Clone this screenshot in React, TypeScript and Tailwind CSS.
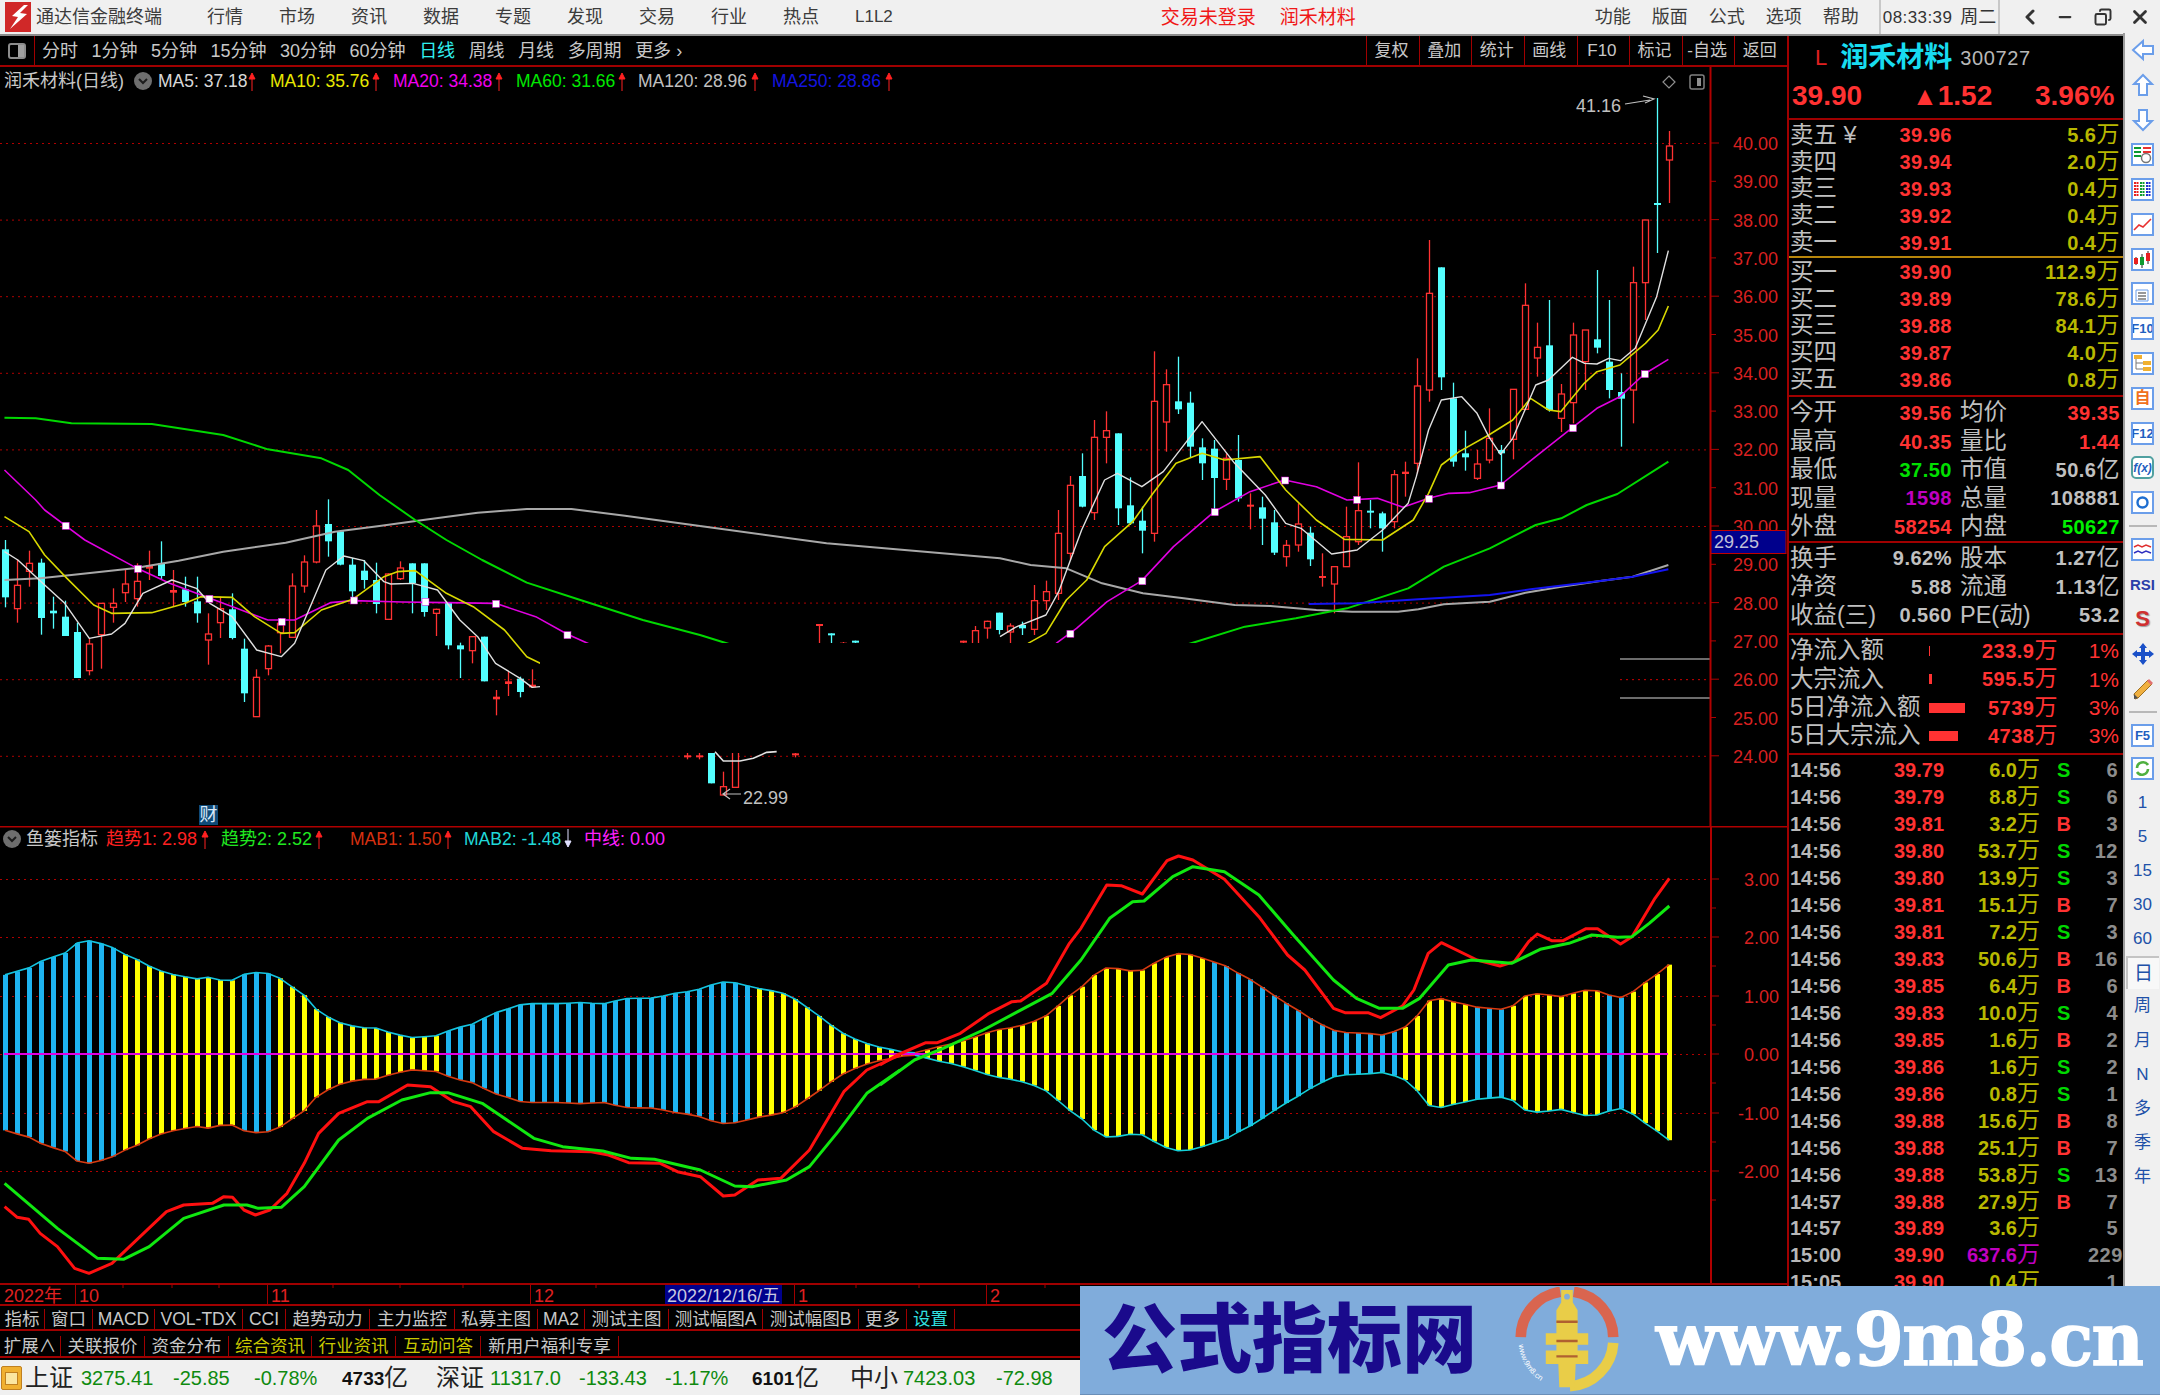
import React from 'react'
import { ChevronLeft, Minus, X, Copy } from 'lucide-react'

type Pt = [number, number]
type Candle = [number, 'r' | 'c', number, number, number, number]

const RED = '#ff3232'
const CYAN = '#54ffff'

// page coordinates from the crops of the reference
const xOf = (i: number) => 5 + 11.97 * i
const z6 = (p: Pt[]) => p.map(([x, y]) => `${x / 2.24},${400 + y / 3}`).join(' ')
const z7 = (p: Pt[]) => p.map(([x, y]) => `${1000 + x / 1.96},${220 + y / 3}`).join(' ')
const z8 = (p: Pt[]) => p.map(([x, y]) => `${x / 1.742},${820 + y / 3}`).join(' ')
const z9 = (p: Pt[]) => p.map(([x, y]) => `${880 + x / 1.742},${820 + y / 3}`).join(' ')
const z11 = (p: Pt[]) => p.map(([x, y]) => `${520 + x / 3},${600 + y / 3}`).join(' ')

const candlesLeft: Candle[] = [
  [0, 'c', 420, 448, 592, 622], [1, 'r', 478, 556, 626, 668], [2, 'r', 452, 490, 514, 560], [3, 'c', 476, 488, 654, 704],
  [4, 'c', 590, 632, 640, 686], [5, 'c', 602, 650, 708, 708], [6, 'c', 668, 696, 834, 834], [7, 'r', 716, 732, 812, 826],
  [8, 'r', 610, 610, 704, 806], [9, 'r', 565, 610, 622, 668], [10, 'r', 510, 552, 578, 606], [11, 'r', 490, 544, 596, 620],
  [12, 'r', 452, 496, 506, 540], [13, 'c', 424, 490, 528, 540], [14, 'r', 510, 570, 578, 620], [15, 'c', 530, 568, 606, 620],
  [16, 'c', 530, 604, 640, 668], [17, 'r', 640, 702, 720, 794], [18, 'r', 590, 626, 668, 714], [19, 'c', 580, 628, 714, 718],
  [20, 'c', 716, 746, 880, 906], [21, 'r', 808, 832, 950, 950], [22, 'r', 735, 738, 806, 826], [23, 'r', 654, 670, 698, 760],
  [24, 'r', 520, 558, 712, 712], [25, 'r', 466, 486, 558, 578], [26, 'r', 330, 378, 486, 490], [27, 'c', 298, 372, 424, 470],
  [28, 'c', 394, 394, 494, 496], [29, 'c', 474, 494, 574, 600], [30, 'c', 480, 512, 540, 566], [31, 'c', 488, 540, 612, 640],
  [32, 'r', 520, 522, 658, 658], [33, 'r', 484, 504, 536, 540], [34, 'c', 490, 490, 550, 640], [35, 'c', 490, 490, 636, 650],
  [36, 'r', 626, 628, 640, 708], [37, 'c', 606, 606, 736, 748], [38, 'c', 728, 736, 748, 834], [39, 'r', 710, 710, 752, 790],
  [40, 'c', 710, 710, 844, 844], [41, 'r', 870, 890, 898, 946], [42, 'r', 816, 844, 852, 888], [43, 'c', 830, 836, 876, 892],
  [44, 'r', 808, 854, 862, 862],
]

const candlesMid: Candle[] = [
  [57, 'r', 455, 466, 467, 478], [58, 'r', 455, 466, 467, 478], [59, 'c', 455, 455, 550, 550], [60, 'r', 515, 560, 585, 585],
  [61, 'r', 440, 440, 562, 562], [66, 'r', 455, 460, 461, 472], [68, 'r', 72, 72, 73, 130], [69, 'c', 100, 100, 101, 130],
  [70, 'r', 126, 128, 130, 131], [71, 'c', 122, 122, 123, 130], [80, 'r', 122, 122, 123, 130], [81, 'r', 78, 92, 140, 140],
  [82, 'r', 62, 64, 84, 116], [83, 'c', 38, 38, 90, 103],
]

const candlesRight: Candle[] = [
  [84, 'r', 1210, 1218, 1236, 1270], [85, 'c', 1205, 1215, 1225, 1245], [86, 'r', 1095, 1142, 1228, 1245], [87, 'r', 1082, 1115, 1142, 1170],
  [88, 'r', 870, 940, 1120, 1140], [89, 'r', 768, 796, 1000, 1020], [90, 'c', 700, 768, 860, 862], [91, 'r', 600, 652, 878, 900],
  [92, 'r', 574, 632, 652, 730], [93, 'c', 640, 640, 865, 915], [94, 'c', 772, 856, 910, 915], [95, 'c', 860, 902, 932, 1000],
  [96, 'r', 394, 544, 940, 965], [97, 'r', 448, 494, 606, 695], [98, 'c', 410, 544, 568, 582], [99, 'c', 515, 548, 680, 712],
  [100, 'c', 655, 682, 730, 780], [101, 'c', 660, 686, 774, 880], [102, 'r', 700, 715, 778, 810], [103, 'c', 645, 720, 835, 845],
  [104, 'r', 820, 854, 860, 928], [105, 'c', 830, 862, 896, 975], [106, 'c', 870, 907, 998, 1005], [107, 'r', 960, 976, 1010, 1040],
  [108, 'r', 850, 912, 975, 995], [109, 'c', 920, 938, 1018, 1038], [110, 'r', 1000, 1068, 1072, 1100], [111, 'r', 1040, 1040, 1092, 1180],
  [112, 'r', 860, 950, 1040, 1040], [113, 'r', 727, 872, 965, 975], [114, 'c', 840, 872, 878, 925], [115, 'c', 875, 880, 925, 995],
  [116, 'r', 750, 764, 905, 925], [117, 'r', 725, 755, 762, 830], [118, 'r', 415, 498, 730, 760], [119, 'r', 60, 220, 510, 545],
  [120, 'c', 142, 142, 472, 510], [121, 'c', 488, 535, 725, 740], [122, 'c', 632, 700, 712, 752], [123, 'r', 690, 732, 775, 780],
  [124, 'r', 565, 655, 720, 730], [125, 'c', 675, 690, 700, 790], [126, 'r', 508, 508, 658, 718], [127, 'r', 190, 256, 568, 570],
  [128, 'r', 308, 382, 414, 470], [129, 'c', 240, 376, 570, 575], [130, 'r', 492, 522, 595, 636], [131, 'r', 308, 345, 548, 610],
  [132, 'r', 330, 330, 425, 510], [133, 'c', 150, 358, 383, 400], [134, 'c', 240, 425, 510, 535], [135, 'c', 460, 516, 536, 680],
  [136, 'r', 140, 188, 510, 610], [137, 'r', 0, 0, 188, 300], [138, 'c', -366, -51, -48, 99], [139, 'r', -267, -222, -180, -51],
]

const ma120A: Pt[] = [[10, 540], [90, 535], [160, 525], [300, 505], [400, 482], [500, 455], [640, 428], [750, 395], [850, 378], [960, 358], [1070, 338], [1180, 327], [1280, 327], [1400, 347], [1568, 378]]
const ma120B: Pt[] = [[-340, 970], [0, 1015], [60, 1035], [130, 1045], [200, 1090], [280, 1120], [360, 1135], [460, 1155], [530, 1158], [620, 1170], [690, 1175], [780, 1175], [820, 1168], [870, 1153], [960, 1145], [1030, 1118], [1100, 1100], [1180, 1082], [1240, 1070], [1310, 1035]]
const ma60A: Pt[] = [[10, 53], [80, 55], [160, 70], [340, 72], [500, 105], [600, 148], [720, 175], [780, 210], [850, 285], [930, 360], [1000, 420], [1080, 480], [1180, 548], [1300, 600], [1440, 660], [1568, 705], [1640, 735]]
const ma60B: Pt[] = [[370, 1272], [480, 1220], [580, 1195], [680, 1165], [800, 1105], [870, 1040], [960, 985], [1050, 915], [1100, 895], [1150, 855], [1210, 822], [1310, 725]]
const ma20A: Pt[] = [[10, 210], [80, 300], [100, 330], [146, 376], [190, 420], [300, 500], [380, 550], [470, 595], [530, 625], [600, 660], [660, 660], [740, 608], [790, 602], [900, 606], [1000, 608], [1110, 610], [1200, 650], [1270, 702], [1320, 732]]
const ma20B: Pt[] = [[110, 1270], [150, 1225], [210, 1145], [278, 1082], [340, 980], [420, 875], [490, 815], [558, 780], [620, 800], [680, 840], [740, 835], [790, 862], [840, 835], [880, 820], [920, 818], [981, 795], [1050, 710], [1120, 625], [1170, 565], [1215, 530], [1263, 462], [1310, 418]]
const ma10A: Pt[] = [[10, 350], [65, 395], [100, 465], [150, 535], [210, 615], [250, 640], [340, 638], [410, 612], [450, 590], [520, 592], [570, 650], [630, 700], [660, 698], [720, 630], [790, 598], [860, 530], [890, 515], [930, 512], [1000, 580], [1060, 620], [1130, 690], [1180, 770], [1210, 790]]
const ma10B: Pt[] = [[55, 1270], [90, 1240], [130, 1140], [170, 1080], [205, 980], [260, 905], [300, 820], [345, 730], [396, 700], [440, 720], [510, 710], [560, 810], [620, 900], [675, 958], [750, 960], [810, 900], [840, 820], [865, 735], [900, 695], [958, 645], [1005, 600], [1040, 535], [1075, 570], [1099, 575], [1145, 490], [1170, 455], [1215, 435], [1265, 370], [1290, 330], [1310, 258]]
const ma5A: Pt[] = [[10, 455], [40, 480], [100, 555], [145, 610], [200, 715], [250, 702], [280, 670], [320, 580], [385, 540], [440, 565], [470, 610], [520, 650], [575, 750], [630, 770], [660, 730], [730, 510], [770, 468], [815, 482], [860, 545], [875, 552], [925, 550], [980, 570], [1030, 660], [1070, 710], [1110, 790], [1165, 835], [1192, 862], [1210, 860]]
const ma5B: Pt[] = [[0, 1250], [30, 1222], [90, 1185], [115, 1115], [160, 930], [205, 780], [230, 760], [278, 800], [320, 755], [396, 605], [460, 730], [520, 825], [560, 910], [590, 925], [650, 1002], [700, 990], [750, 930], [800, 850], [816, 770], [840, 630], [865, 540], [905, 530], [935, 580], [958, 650], [981, 703], [1005, 655], [1050, 495], [1075, 480], [1122, 412], [1146, 430], [1170, 432], [1193, 415], [1216, 422], [1245, 385], [1287, 230], [1310, 92]]
const ma5Low: Pt[] = [[585, 455], [610, 483], [660, 483], [700, 475], [740, 457], [770, 455]]
const ma250: Pt[] = [[605, 1152], [700, 1150], [820, 1138], [960, 1125], [1040, 1108], [1180, 1082], [1240, 1070], [1310, 1048]]
const marksA: Pt[] = [[146, 376], [308, 505], [468, 595], [630, 664], [792, 600], [952, 604], [1110, 610], [1270, 704]]
const marksB: Pt[] = [[137, 1240], [278, 1082], [420, 875], [558, 780], [699, 838], [840, 835], [981, 795], [1122, 623], [1263, 461]]

const trend1A: Pt[] = [[8, 1160], [30, 1192], [50, 1198], [70, 1240], [100, 1280], [130, 1345], [155, 1360], [195, 1330], [250, 1240], [290, 1175], [320, 1155], [370, 1150], [390, 1130], [405, 1132], [425, 1170], [445, 1185], [470, 1170], [500, 1120], [530, 1030], [555, 940], [590, 880], [640, 845], [660, 845], [710, 795], [750, 800], [790, 845], [820, 860], [860, 935], [910, 985], [960, 992], [1030, 995], [1060, 1005], [1095, 1028], [1150, 1030], [1180, 1055], [1220, 1070], [1260, 1128], [1280, 1125], [1320, 1080], [1360, 1075], [1410, 990], [1470, 815], [1510, 750], [1568, 705]]
const trend1B: Pt[] = [[0, 735], [30, 705], [80, 668], [100, 668], [140, 640], [190, 580], [230, 545], [245, 543], [290, 490], [330, 370], [350, 325], [395, 195], [420, 197], [457, 222], [500, 122], [520, 108], [545, 120], [600, 178], [660, 290], [710, 405], [740, 450], [790, 565], [810, 578], [850, 578], [872, 593], [910, 558], [930, 510], [955, 400], [978, 368], [1040, 420], [1080, 438], [1105, 425], [1130, 365], [1145, 342], [1170, 362], [1190, 362], [1230, 326], [1250, 326], [1290, 372], [1310, 350], [1350, 235], [1375, 175]]
const trend2A: Pt[] = [[8, 1090], [100, 1225], [170, 1315], [215, 1318], [260, 1280], [320, 1195], [390, 1155], [430, 1155], [450, 1165], [490, 1162], [530, 1100], [590, 960], [640, 895], [700, 840], [750, 818], [780, 818], [840, 850], [930, 955], [980, 980], [1050, 993], [1100, 1015], [1140, 1018], [1220, 1050], [1280, 1098], [1310, 1100], [1370, 1080], [1410, 1040], [1460, 935], [1510, 820], [1568, 750]]
const trend2B: Pt[] = [[0, 795], [60, 720], [110, 685], [180, 630], [240, 575], [300, 520], [350, 420], [400, 295], [440, 245], [460, 243], [510, 170], [545, 140], [600, 155], [660, 225], [720, 345], [790, 480], [830, 535], [870, 565], [910, 565], [940, 535], [990, 435], [1030, 420], [1100, 430], [1150, 388], [1200, 370], [1240, 345], [1285, 352], [1310, 350], [1340, 310], [1375, 258]]

// histogram envelope, read every 21px of the crops
const histA = [466, 455, 445, 425, 412, 400, 370, 363, 372, 385, 405, 420, 440, 455, 465, 472, 478, 472, 482, 482, 462, 458, 462, 478, 505, 530, 575, 595, 612, 620, 625, 625, 640, 648, 655, 650, 648, 630, 620, 612, 590, 575, 565, 552, 552, 552, 552, 550, 548, 552, 552, 540, 535, 536, 535, 526, 518, 515, 505, 490, 485, 492, 502, 510, 515, 525, 548, 575, 600, 630, 650, 665, 678, 686, 692]
const histB = [702, 697, 683, 678, 668, 658, 645, 632, 627, 622, 610, 598, 575, 535, 515, 480, 445, 445, 450, 460, 438, 418, 402, 402, 410, 425, 432, 455, 472, 495, 520, 545, 565, 590, 610, 630, 638, 640, 640, 648, 638, 628, 600, 545, 535, 545, 552, 562, 565, 570, 563, 530, 522, 525, 532, 522, 512, 512, 525, 535, 518, 490, 465, 435]
const envelope: Pt[] = [
  ...histA.map((v, k): Pt => [(8 + 21 * k) / 1.742, (703 - v) / 3]),
  ...histB.map((v, k): Pt => [880 + (50 + 21 * k) / 1.742, (703 - v) / 3]),
]
const ampAt = (x: number) => {
  for (let k = 1; k < envelope.length; k++) {
    if (x <= envelope[k][0]) {
      const [x0, a0] = envelope[k - 1]
      const [x1, a1] = envelope[k]
      return a0 + ((a1 - a0) * (x - x0)) / (x1 - x0)
    }
  }
  return envelope[envelope.length - 1][1]
}
const yellowRanges: Pt[] = [[118, 238], [276, 445], [755, 1213], [1397, 1470], [1506, 1602], [1626, 1700]]
const bars = Array.from({ length: 140 }, (_, i) => {
  const x = xOf(i)
  return { x: Math.round(x), a: Math.max(ampAt(x), 0.5), yellow: yellowRanges.some(([a, b]) => x >= a && x < b) }
})
const envLine = (from: number, to: number, side: number) =>
  bars.filter((b) => b.x >= from && b.x <= to).map((b) => `${b.x},${1054 + (side > 0 ? 0.965 : -1) * b.a}`).join(' ')

function Candles({ data, base }: { data: Candle[]; base: number }) {
  const y = (v: number) => base + v / 3
  return (
    <>
      {data.map(([i, c, hi, top, bot, lo]) => {
        const x = Math.round(xOf(i))
        const color = c === 'r' ? RED : CYAN
        const h = y(bot) - y(top)
        return (
          <g key={i}>
            <line x1={x + 0.5} x2={x + 0.5} y1={y(hi)} y2={y(lo)} stroke={color} strokeWidth="1.3" />
            {c === 'c' || h < 4 ? (
              <rect x={x - 3} y={y(top)} width="7" height={Math.max(h, 2)} fill={color} />
            ) : (
              <rect x={x - 2.5} y={y(top)} width="6" height={h} fill="#000" stroke={color} strokeWidth="1.3" />
            )}
          </g>
        )
      })}
    </>
  )
}

function Grid({ ys }: { ys: number[] }) {
  return (
    <>
      {ys.map((y) => (
        <line key={y} x1="0" x2="1710" y1={y + 0.5} y2={y + 0.5} stroke="#b00000" strokeDasharray="2 4" />
      ))}
    </>
  )
}

function MainChart() {
  const labels = Array.from({ length: 17 }, (_, k) => 40 - k)
  const py = (p: number) => 143 + (40 - p) * 38.3
  return (
    <svg viewBox="0 67 1787 759" className="block w-[1787px] h-[759px]">
      <Grid ys={[40, 38, 36, 34, 32, 30, 28, 26, 24].map(py)} />
      <Candles data={candlesLeft} base={400} />
      <Candles data={candlesMid} base={600} />
      <Candles data={candlesRight} base={220} />
      <g fill="none" strokeLinejoin="round">
        <polyline points={z6(ma120A)} stroke="#a8a8a8" strokeWidth="2" />
        <polyline points={`${1568 / 2.24},${400 + 378 / 3} ${z7(ma120B)}`} stroke="#a8a8a8" strokeWidth="2" />
        <polyline points={z6(ma60A)} stroke="#00d800" strokeWidth="2" />
        <polyline points={z7(ma60B)} stroke="#00d800" strokeWidth="2" />
        <polyline points={z7(ma250)} stroke="#1414f0" strokeWidth="2" />
        <polyline points={z6(ma20A)} stroke="#e000e0" strokeWidth="1.6" />
        <polyline points={z7(ma20B)} stroke="#e000e0" strokeWidth="1.6" />
        <polyline points={z6(ma10A)} stroke="#d8d800" strokeWidth="1.6" />
        <polyline points={z7(ma10B)} stroke="#d8d800" strokeWidth="1.6" />
        <polyline points={z6(ma5A)} stroke="#e0e0e0" strokeWidth="1.4" />
        <polyline points={z7(ma5B)} stroke="#e0e0e0" strokeWidth="1.4" />
      </g>
      {marksA.map(([x, y]) => (
        <rect key={x} x={x / 2.24 - 3} y={400 + y / 3 - 3} width="7" height="7" fill="#fff" stroke="#e000e0" strokeWidth="0.5" />
      ))}
      {marksB.map(([x, y]) => (
        <rect key={x} x={1000 + x / 1.96 - 3} y={220 + y / 3 - 3} width="7" height="7" fill="#fff" stroke="#e000e0" strokeWidth="0.5" />
      ))}
      {/* the part of the chart that is blanked out in the picture */}
      <rect x="540" y="643" width="1080" height="110" fill="#000" />
      <polyline points={z11(ma5Low)} fill="none" stroke="#e0e0e0" strokeWidth="1.6" />
      <line x1="1620" x2="1710" y1="659" y2="659" stroke="#909090" strokeWidth="1.5" />
      <line x1="1620" x2="1710" y1="698" y2="698" stroke="#909090" strokeWidth="1.5" />
      <line x1="1620" x2="1710" y1="679.5" y2="679.5" stroke="#b00000" strokeDasharray="2 4" />

      {/* high and low marks */}
      <text x="1576" y="112" fontSize="18" fill="#c0c0c0">41.16</text>
      <path d="M1625 104 L1650 100 M1643 96 L1654 99 L1645 103" fill="none" stroke="#c0c0c0" strokeWidth="1.2" />
      <text x="743" y="804" fontSize="18" fill="#c0c0c0">22.99</text>
      <path d="M741 794 L724 794 M730 789 L723 794 L730 799" fill="none" stroke="#c0c0c0" strokeWidth="1.2" />
      <path d="M1669 76 L1675 82 L1669 88 L1663 82 Z" fill="none" stroke="#909090" strokeWidth="1.2" />
      <rect x="1690" y="75" width="14" height="14" rx="2" fill="none" stroke="#808080" strokeWidth="1.5" />
      <rect x="1697" y="78" width="4" height="8" fill="#909090" />

      <rect x="199" y="805" width="19" height="20" fill="#0f4a78" />
      <text x="199.5" y="821" fontSize="18" fill="#d8e8f8">财</text>

      {/* price axis */}
      <line x1="1710.5" x2="1710.5" y1="67" y2="826" stroke="#b00000" strokeWidth="2" />
      {labels.map((p) => (
        <g key={p}>
          <line x1="1711" x2={p % 2 === 0 ? 1719 : 1716} y1={py(p)} y2={py(p)} stroke="#b00000" />
          <text x="1733" y={py(p) + 7} fontSize="18" fill="#d82020">{p}.00</text>
        </g>
      ))}
      <rect x="1711" y="530.5" width="75" height="23" fill="#00008c" stroke="#c00000" />
      <text x="1714" y="548" fontSize="18" fill="#c0c0d8">29.25</text>
    </svg>
  )
}

function IndicatorChart() {
  const ticks = [
    ['3.00', 879], ['2.00', 937], ['1.00', 996], ['0.00', 1054], ['-1.00', 1113], ['-2.00', 1171],
  ] as const
  return (
    <svg viewBox="0 826 1787 457" className="block w-[1787px] h-[457px]">
      <Grid ys={ticks.map((t) => t[1])} />
      {bars.map((b) => (
        <rect key={b.x} x={b.x - 2} y={1054 - b.a} width="5" height={b.a * 1.965} fill={b.yellow ? '#ffff00' : '#1eb4f0'} />
      ))}
      <g fill="none" strokeLinejoin="round">
        <polyline points={envLine(0, 915, -1)} stroke="#14c4e0" strokeWidth="1.6" />
        <polyline points={envLine(0, 915, 1)} stroke="#d83a10" strokeWidth="1.6" />
        <polyline points={envLine(905, 1700, -1)} stroke="#d83a10" strokeWidth="1.6" />
        <polyline points={envLine(905, 1700, 1)} stroke="#14d0d8" strokeWidth="1.6" />
      </g>
      <line x1="4" x2="1668" y1="1054" y2="1054" stroke="#e000e0" strokeWidth="2" />
      <g fill="none" strokeLinejoin="round" strokeWidth="3">
        <polyline points={z8(trend1A)} stroke="#ff1010" />
        <polyline points={z9(trend1B)} stroke="#ff1010" />
        <polyline points={z8(trend2A)} stroke="#10e810" />
        <polyline points={z9(trend2B)} stroke="#10e810" />
      </g>
      <line x1="0" x2="1787" y1="826.5" y2="826.5" stroke="#b00000" strokeWidth="2" />
      <line x1="1711" x2="1711" y1="826" y2="1283" stroke="#b00000" strokeWidth="2" />
      {ticks.map(([t, y]) => (
        <g key={t}>
          <line x1="1711" x2="1719" y1={y} y2={y} stroke="#b00000" />
          <line x1="1711" x2="1716" y1={y + 29} y2={y + 29} stroke="#b00000" />
          <text x="1779" y={y + 7} fontSize="18" fill="#d82020" textAnchor="end">{t}</text>
        </g>
      ))}
    </svg>
  )
}

function UpArrow({ down, className }: { down?: boolean; className: string }) {
  return (
    <svg viewBox="0 0 8 20" className={`w-[8px] h-[20px] shrink-0 ${className}`}>
      {down ? <path d="M4 0V13 M1 12L4 18L7 12Z" stroke="currentColor" fill="currentColor" /> : <path d="M4 20V7 M1 8L4 2L7 8Z" stroke="currentColor" fill="currentColor" />}
    </svg>
  )
}

function CircleBtn() {
  return (
    <span className="flex items-center justify-center w-[18px] h-[18px] rounded-full bg-[#6e6e6e] shrink-0">
      <svg viewBox="0 0 12 12" className="w-[12px] h-[12px]">
        <path d="M2 4L6 8L10 4" fill="none" stroke="#1c1c1c" strokeWidth="2" />
      </svg>
    </span>
  )
}

const maLegend = [
  { text: 'MA5: 37.18', cls: 'text-[#d8d8d8] w-[88px] ml-[6px]' },
  { text: 'MA10: 35.76', cls: 'text-[#e8e800] w-[100px] ml-[14px]' },
  { text: 'MA20: 34.38', cls: 'text-[#f000f0] w-[100px] ml-[13px]' },
  { text: 'MA60: 31.66', cls: 'text-[#00e800] w-[100px] ml-[13px]' },
  { text: 'MA120: 28.96', cls: 'text-[#c0c0c0] w-[111px] ml-[12px]' },
  { text: 'MA250: 28.86', cls: 'text-[#1414e0] w-[111px] ml-[13px]' },
]

const fullTabs = [
  { t: '指标', w: 'w-[45px]' }, { t: '窗口', w: 'w-[48px]' }, { t: 'MACD', w: 'w-[62px]' }, { t: 'VOL-TDX', w: 'w-[88px]' },
  { t: 'CCI', w: 'w-[43px]' }, { t: '趋势动力', w: 'w-[84px]' }, { t: '主力监控', w: 'w-[85px]' }, { t: '私募主图', w: 'w-[83px]' },
  { t: 'MA2', w: 'w-[47px]' }, { t: '测试主图', w: 'w-[84px]' }, { t: '测试幅图A', w: 'w-[94px]' }, { t: '测试幅图B', w: 'w-[96px]' },
  { t: '更多', w: 'w-[48px]' }, { t: '设置', w: 'w-[48px] text-[#30e0e0]' },
]
const extTabs = [
  { t: '扩展∧', w: 'w-[61px]' }, { t: '关联报价', w: 'w-[84px]' }, { t: '资金分布', w: 'w-[84px]' },
  { t: '综合资讯', w: 'w-[83px] text-[#c8c800]' }, { t: '行业资讯', w: 'w-[84px] text-[#c8c800]' }, { t: '互动问答', w: 'w-[85px] text-[#c8c800]' },
  { t: '新用户福利专享', w: 'w-[138px]' },
]

function TabRow({ tabs, className }: { tabs: { t: string; w: string }[]; className: string }) {
  return (
    <div className={`flex border-b-2 border-[#a00000] ${className}`}>
      {tabs.map((tab) => (
        <div key={tab.t} className={`flex items-center justify-center border-r border-[#a00000] text-[17.5px] whitespace-nowrap ${tab.w}`}>
          {tab.t}
        </div>
      ))}
    </div>
  )
}

function LeftColumn() {
  const ticks = [123, 172, 219, 333, 400, 463, 596, 856, 919, 1045]
  return (
    <div className="w-[1787px] shrink-0 flex flex-col">
      <div className="h-[31px] flex items-center border-b-2 border-[#a00000] text-[#c8c8c8] text-[18px] leading-none">
        <div className="w-[35px] h-full flex items-center justify-center border-r border-[#a00000]">
          <span className="w-[18px] h-[16px] rounded-[3px] border-2 border-[#8c8c8c] flex justify-end">
            <span className="w-[6px] bg-[#a0a0a0]" />
          </span>
        </div>
        <div className="flex gap-[13.5px] ml-[7px]">
          {['分时', '1分钟', '5分钟', '15分钟', '30分钟', '60分钟'].map((t) => <span key={t}>{t}</span>)}
          <span className="text-[#30f0f0]">日线</span>
          <span>周线</span>
          <span>月线</span>
          <span>多周期</span>
          <span>更多 ›</span>
        </div>
        <div className="ml-auto flex h-full">
          {['复权', '叠加', '统计', '画线', 'F10', '标记', '-自选', '返回'].map((t) => (
            <div key={t} className="w-[52.6px] h-full flex items-center justify-center border-l border-[#a00000] text-[17px] whitespace-nowrap pr-[3px]">{t}</div>
          ))}
        </div>
      </div>

      <div className="relative h-[759px]">
        <MainChart />
        <div className="absolute left-[4px] top-[3px] flex items-center h-[22px] text-[17.5px] whitespace-nowrap">
          <span className="text-[#c8c8c8] text-[18px] w-[130px]">润禾材料(日线)</span>
          <CircleBtn />
          {maLegend.map((m) => (
            <React.Fragment key={m.text}>
              <span className={m.cls}>{m.text}</span>
              <UpArrow className="text-[#ff2020] ml-[2px]" />
            </React.Fragment>
          ))}
        </div>
      </div>

      <div className="relative h-[457px]">
        <IndicatorChart />
        <div className="absolute left-[3px] top-[2px] flex items-center h-[22px] text-[17.5px] whitespace-nowrap">
          <CircleBtn />
          <span className="text-[#c8c8c8] w-[80px] ml-[5px] text-[18px]">鱼篓指标</span>
          <span className="text-[#ff2020] w-[92px] text-[18px]">趋势1: 2.98</span>
          <UpArrow className="text-[#ff2020] ml-[3px]" />
          <span className="text-[#20e820] w-[92px] ml-[12px] text-[18px]">趋势2: 2.52</span>
          <UpArrow className="text-[#ff2020] ml-[2px]" />
          <span className="text-[#d83010] w-[92px] ml-[27px]">MAB1: 1.50</span>
          <UpArrow className="text-[#ff2020] ml-[2px]" />
          <span className="text-[#20d8d8] w-[98px] ml-[12px]">MAB2: -1.48</span>
          <UpArrow down className="text-[#e0e0ff] ml-[2px]" />
          <span className="text-[#ff20ff] ml-[12px] text-[18px]">中线: 0.00</span>
        </div>
      </div>

      <div className="relative h-[23px] flex border-y-2 border-[#a00000] text-[#e02020] text-[18px] leading-none">
        <div className="w-[76px] flex items-center pl-[4px] pt-[2px] border-r border-[#a00000] whitespace-nowrap">2022年</div>
        <div className="w-[192px] flex items-center pl-[3px] pt-[2px] border-r border-[#a00000]">10</div>
        <div className="w-[263px] flex items-center pl-[3px] pt-[2px] border-r border-[#a00000]">11</div>
        <div className="w-[134px] flex items-center pl-[3px] pt-[2px]">12</div>
        <div className="w-[117px] flex items-center justify-center pt-[2px] bg-[#00008c] text-[#c8c8e0] text-[18px] whitespace-nowrap">2022/12/16/五</div>
        <div className="w-[12px]" />
        <div className="w-[192px] flex items-center pl-[3px] pt-[2px] border-l border-[#a00000]">1</div>
        <div className="flex items-center pl-[3px] pt-[2px] border-l border-[#a00000]">2</div>
        <svg viewBox="0 0 1787 4" className="absolute left-0 top-0 w-[1787px] h-[4px]">
          {ticks.map((x) => <line key={x} x1={x} x2={x} y1="0" y2="3" stroke="#a00000" />)}
        </svg>
      </div>
      <TabRow tabs={fullTabs} className="h-[25px] pt-[3px] text-[#c8c8c8]" />
      <TabRow tabs={extTabs} className="h-[27px] pt-[5px] text-[#c8c8c8]" />
    </div>
  )
}

function Wan({ cls }: { cls?: string }) {
  return <span className={`font-normal text-[23px] leading-none ${cls ?? ''}`}>万</span>
}

const num = 'font-bold text-[20px] tracking-[0.5px]'
const label = 'text-[23.5px] text-[#c0c0c0] leading-none whitespace-nowrap'

function QuoteRow({ name, price, vol }: { name: string; price: string; vol: string }) {
  return (
    <div className="h-[26.9px] flex items-center">
      <span className={`${label} w-[108px] pl-[1px]`}>{name}</span>
      <span className={`${num} text-[#ff3232] w-[55px] text-right`}>{price}</span>
      <span className={`${num} text-[#b8b800] flex-1 text-right pr-[3px]`}>{vol}<Wan /></span>
    </div>
  )
}

function StatRow({ a, b, c, d, cls1, cls2, rowCls }: { a: string; b: React.ReactNode; c: string; d: React.ReactNode; cls1: string; cls2: string; rowCls: string }) {
  return (
    <div className={`${rowCls} flex items-center`}>
      <span className={`${label} pl-[1px] w-[82px]`}>{a}</span>
      <span className={`${num} ${cls1} w-[81px] text-right`}>{b}</span>
      <span className={`${label} ml-[8px] w-[66px]`}>{c}</span>
      <span className={`${num} ${cls2} flex-1 text-right pr-[3px]`}>{d}</span>
    </div>
  )
}

const yi = <span className="font-normal text-[23px] leading-none">亿</span>

const flows = [
  { n: '净流入额', w: 1, v: '233.9', p: '1%' },
  { n: '大宗流入', w: 3, v: '595.5', p: '1%' },
  { n: '5日净流入额', w: 36, v: '5739', p: '3%' },
  { n: '5日大宗流入', w: 29, v: '4738', p: '3%' },
]

const trades = [
  ['14:56', '39.79', '6.0', 'S', '6'], ['14:56', '39.79', '8.8', 'S', '6'], ['14:56', '39.81', '3.2', 'B', '3'],
  ['14:56', '39.80', '53.7', 'S', '12'], ['14:56', '39.80', '13.9', 'S', '3'], ['14:56', '39.81', '15.1', 'B', '7'],
  ['14:56', '39.81', '7.2', 'S', '3'], ['14:56', '39.83', '50.6', 'B', '16'], ['14:56', '39.85', '6.4', 'B', '6'],
  ['14:56', '39.83', '10.0', 'S', '4'], ['14:56', '39.85', '1.6', 'B', '2'], ['14:56', '39.86', '1.6', 'S', '2'],
  ['14:56', '39.86', '0.8', 'S', '1'], ['14:56', '39.88', '15.6', 'B', '8'], ['14:56', '39.88', '25.1', 'B', '7'],
  ['14:56', '39.88', '53.8', 'S', '13'], ['14:57', '39.88', '27.9', 'B', '7'], ['14:57', '39.89', '3.6', '', '5'],
  ['15:00', '39.90', '637.6', '', '229'], ['15:05', '39.90', '0.4', '', '1'],
]

function QuotePanel() {
  return (
    <div className="w-[336px] shrink-0 flex flex-col border-l-2 border-[#a00000] overflow-hidden">
      <div className="h-[40px] flex items-center pt-[3px] pl-[26px] whitespace-nowrap">
        <span className="text-[#e02020] text-[22px] leading-none">L</span>
        <span className="text-[#18dcf0] text-[28px] font-bold ml-[13px] leading-none">润禾材料</span>
        <span className="text-[#b8b8b8] text-[20px] ml-[8px] leading-none tracking-[0.6px]">300727</span>
      </div>
      <div className="h-[44px] flex items-center border-b-2 border-[#a00000] pb-[2px] text-[#ff3232] font-bold text-[28px] leading-none">
        <span className="ml-[3px] w-[120px]">39.90</span>
        <span className="w-[123px] whitespace-nowrap"><span className="text-[26px]">▲</span>1.52</span>
        <span>3.96%</span>
      </div>
      <div className="h-[138px] pt-[2px] border-b-2 border-[#b8860b]">
        <QuoteRow name="卖五 ¥" price="39.96" vol="5.6" />
        <QuoteRow name="卖四" price="39.94" vol="2.0" />
        <QuoteRow name="卖三" price="39.93" vol="0.4" />
        <QuoteRow name="卖二" price="39.92" vol="0.4" />
        <QuoteRow name="卖一" price="39.91" vol="0.4" />
      </div>
      <div className="h-[139px] pt-[1px] border-b-2 border-[#a00000]">
        <QuoteRow name="买一" price="39.90" vol="112.9" />
        <QuoteRow name="买二" price="39.89" vol="78.6" />
        <QuoteRow name="买三" price="39.88" vol="84.1" />
        <QuoteRow name="买四" price="39.87" vol="4.0" />
        <QuoteRow name="买五" price="39.86" vol="0.8" />
      </div>
      <div className="h-[146px] pt-[2px] border-b-2 border-[#a00000]">
        <StatRow rowCls="h-[28.4px]" a="今开" b="39.56" c="均价" d="39.35" cls1="text-[#ff3232]" cls2="text-[#ff3232]" />
        <StatRow rowCls="h-[28.4px]" a="最高" b="40.35" c="量比" d="1.44" cls1="text-[#ff3232]" cls2="text-[#ff3232]" />
        <StatRow rowCls="h-[28.4px]" a="最低" b="37.50" c="市值" d={<>50.6{yi}</>} cls1="text-[#00e000]" cls2="text-[#c0c0c0]" />
        <StatRow rowCls="h-[28.4px]" a="现量" b="1598" c="总量" d="108881" cls1="text-[#c000c0]" cls2="text-[#c0c0c0]" />
        <StatRow rowCls="h-[28.4px]" a="外盘" b="58254" c="内盘" d="50627" cls1="text-[#ff3232]" cls2="text-[#00f000]" />
      </div>
      <div className="h-[92px] pt-[1px] border-b-2 border-[#a00000]">
        <StatRow rowCls="h-[28.5px]" a="换手" b="9.62%" c="股本" d={<>1.27{yi}</>} cls1="text-[#c0c0c0]" cls2="text-[#c0c0c0]" />
        <StatRow rowCls="h-[28.5px]" a="净资" b="5.88" c="流通" d={<>1.13{yi}</>} cls1="text-[#c0c0c0]" cls2="text-[#c0c0c0]" />
        <StatRow rowCls="h-[28.5px]" a="收益(三)" b="0.560" c="PE(动)" d="53.2" cls1="text-[#c0c0c0]" cls2="text-[#c0c0c0]" />
      </div>
      <div className="h-[120px] pt-[2px] border-b-2 border-[#a00000]">
        {flows.map((f) => (
          <div key={f.n} className="h-[28.3px] flex items-center">
            <span className={`${label} w-[140px] pl-[1px]`}>{f.n}</span>
            <span className="relative w-[129px] flex items-center justify-end">
              <span className="absolute left-0 h-[10px] bg-[#ff3232]" style={{ width: f.w }} />
              <span className={`${num} text-[#ff3232]`}>{f.v}<Wan /></span>
            </span>
            <span className="w-[61px] text-right text-[#ff3232] text-[21px]">{f.p}</span>
          </div>
        ))}
      </div>
      <div>
        {trades.map((t, i) => (
          <div key={i} className="h-[26.97px] grid grid-cols-[105px_52px_94px_48px_30px] items-center">
            <span className={`${num} text-[#b8b8b8] pl-[1px] tracking-[0px]`}>{t[0]}</span>
            <span className={`${num} text-[#ff3232] tracking-[0px]`}>{t[1]}</span>
            <span className={`${num} text-right tracking-[0px] ${t[2] === '637.6' ? 'text-[#c000c0]' : 'text-[#b8b800]'}`}>{t[2]}<Wan /></span>
            <span className={`${num} text-center ${t[3] === 'S' ? 'text-[#00d800]' : 'text-[#ff3232]'}`}>{t[3]}</span>
            <span className={`${num} text-right text-[#8c8c8c]`}>{t[4]}</span>
          </div>
        ))}
      </div>
    </div>
  )
}

function Box({ children, className }: { children: React.ReactNode; className?: string }) {
  return (
    <span className={`flex items-center justify-center w-[23px] h-[23px] border-2 border-[#6b9eea] bg-white overflow-hidden ${className ?? ''}`}>
      {children}
    </span>
  )
}

function Glyph({ children }: { children: React.ReactNode }) {
  return <svg viewBox="0 0 19 19" className="w-[19px] h-[19px]">{children}</svg>
}

const boxText = 'text-[13px] leading-none font-bold text-[#1f5fc0]'

const topIcons: React.ReactNode[] = [
  <svg viewBox="0 0 24 24" className="w-[24px] h-[24px]"><path d="M2 12L12 3V8H22V16H12V21Z" fill="#fff" stroke="#6b9eea" strokeWidth="2" /></svg>,
  <svg viewBox="0 0 24 24" className="w-[24px] h-[24px]"><path d="M12 2L21 11H16V22H8V11H3Z" fill="#fff" stroke="#6b9eea" strokeWidth="2" /></svg>,
  <svg viewBox="0 0 24 24" className="w-[24px] h-[24px]"><path d="M12 22L21 13H16V2H8V13H3Z" fill="#fff" stroke="#6b9eea" strokeWidth="2" /></svg>,
  <Box><Glyph><path d="M1 3H8M1 7H8M1 11H8" stroke="#0a9a30" strokeWidth="2" /><path d="M10 3H18M10 7H18" stroke="#e83030" strokeWidth="2" /><circle cx="13" cy="13" r="4.5" fill="#fff" stroke="#777" strokeWidth="1.5" /></Glyph></Box>,
  <Box><Glyph><path d="M2 2V17M4.5 2V17" stroke="#e82020" strokeWidth="2" strokeDasharray="2 1" /><path d="M8 2V17M10.5 2V17" stroke="#109a30" strokeWidth="2" strokeDasharray="2 1" /><path d="M14 2V17M16.5 2V17" stroke="#2030d0" strokeWidth="2" strokeDasharray="2 1" /></Glyph></Box>,
  <Box><Glyph><path d="M1 15L6 10L10 12L18 4" fill="none" stroke="#e83030" strokeWidth="1.6" /></Glyph></Box>,
  <Box><Glyph><path d="M3 7V15M9 4V18M15 1V14" stroke="#222" strokeWidth="1" /><rect x="1" y="8" width="4" height="6" fill="#e82020" /><rect x="7" y="7" width="4" height="8" fill="#109a30" /><rect x="13" y="3" width="4" height="8" fill="#e82020" /></Glyph></Box>,
  <Box className="bg-[#eef4ff]"><Glyph><path d="M3 6H15V17H3Z" fill="#fff" stroke="#6b9eea" /><path d="M5 9H13M5 12H13M5 15H13" stroke="#777" strokeWidth="1.5" /></Glyph></Box>,
  <Box><span className={boxText}>F10</span></Box>,
  <Box><Glyph><path d="M3 3V15H11M3 9H11" fill="none" stroke="#777" /><rect x="1" y="1" width="8" height="4" fill="#f0b030" /><rect x="10" y="7" width="8" height="4" fill="#f0b030" /><rect x="10" y="13" width="8" height="4" fill="#f0b030" /></Glyph></Box>,
  <Box><span className="text-[16px] leading-none font-bold text-[#f07020]">自</span></Box>,
  <Box><span className={boxText}>F12</span></Box>,
  <Box className="rounded-[5px] border-[#50a0a0]"><span className="text-[12px] leading-none italic font-bold text-[#1f5fc0]">f(x)</span></Box>,
  <Box><Glyph><circle cx="9.5" cy="9.5" r="5" fill="none" stroke="#1f6fd0" strokeWidth="2.4" /></Glyph></Box>,
]

const midIcons: React.ReactNode[] = [
  <Box><Glyph><path d="M1 7L5 5L9 7L13 5L18 7" fill="none" stroke="#e03030" strokeWidth="1.4" /><path d="M1 13L5 11L9 13L13 11L18 13" fill="none" stroke="#3030c0" strokeWidth="1.4" /></Glyph></Box>,
  <span className="text-[15px] leading-none font-bold text-[#2a40a8]">RSI</span>,
  <span className="text-[22px] leading-none font-bold text-[#d03030] [text-shadow:1px_1px_1px_#999]">S</span>,
  <svg viewBox="0 0 24 24" className="w-[24px] h-[24px]"><path d="M12 1L16 6H14V10H18V8L23 12L18 16V14H14V18H16L12 23L8 18H10V14H6V16L1 12L6 8V10H10V6H8Z" fill="#1a50c8" /></svg>,
  <svg viewBox="0 0 24 24" className="w-[24px] h-[24px]"><path d="M4 22L3 17L17 3L21 7L7 21Z" fill="#f0b040" stroke="#a07020" /><path d="M16 4L18 2L22 6L20 8Z" fill="#e07070" /><path d="M3 17L7 21L3 22Z" fill="#505050" /></svg>,
]

function Sidebar() {
  const rule = <div className="h-[12px] flex items-center"><span className="block w-[28px] h-[2px] bg-[#b8b8b8] mx-auto" /></div>
  const cell = 'h-[34.8px] flex items-center justify-center shrink-0'
  const text = 'h-[34.2px] flex items-center justify-center shrink-0 text-[17px] text-[#2050a8] leading-none'
  return (
    <div className="w-[37px] shrink-0 flex flex-col bg-[#f0f0f0] border-l-2 border-[#9c9c9c] -mt-[3px]">
      {topIcons.map((icon, i) => <div key={i} className={cell}>{icon}</div>)}
      {rule}
      {midIcons.map((icon, i) => <div key={i} className={cell}>{icon}</div>)}
      {rule}
      <div className={cell}><Box><span className={boxText}>F5</span></Box></div>
      <div className="h-[32px] flex items-center justify-center shrink-0">
        <Box className="bg-[#e8f4e0]"><Glyph><path d="M4 9A6 6 0 0 1 15 6M15 10A6 6 0 0 1 4 13" fill="none" stroke="#50b040" strokeWidth="2.6" /></Glyph></Box>
      </div>
      {['1', '5', '15', '30', '60'].map((t) => <div key={t} className={text}>{t}</div>)}
      <div className="h-[33px] mx-[1px] flex items-center justify-center shrink-0 text-[19px] text-[#2050a8] leading-none bg-[#f8f8f8] border-t-2 border-l-2 border-[#c4c4c4]">日</div>
      {['周', '月', 'N', '多', '季', '年'].map((t) => <div key={t} className={text}>{t}</div>)}
    </div>
  )
}

function LogoMark() {
  return (
    <svg viewBox="0 0 26 30" className="w-[26px] h-[30px] shrink-0">
      <rect width="26" height="30" fill="#d02828" />
      <path d="M19 3L7 14L13 15L5 27L22 12L15 11L23 3Z" fill="#fff" />
    </svg>
  )
}

function TitleBar() {
  return (
    <div className="h-[36px] shrink-0 flex items-center bg-[#f0f0f0] border-b-2 border-[#8c8c8c] text-[18px] text-[#3c3c3c] leading-none whitespace-nowrap">
      <div className="ml-[5px]"><LogoMark /></div>
      <span className="ml-[5px] text-[18px]">通达信金融终端</span>
      <div className="ml-[45px] flex gap-[36px]">
        {['行情', '市场', '资讯', '数据', '专题', '发现', '交易', '行业', '热点'].map((t) => <span key={t}>{t}</span>)}
        <span className="text-[17px]">L1L2</span>
      </div>
      <span className="ml-[268px] text-[19px] text-[#f01818]">交易未登录</span>
      <span className="ml-[24px] text-[19px] text-[#f01818]">润禾材料</span>
      <div className="ml-[239px] flex gap-[21px]">
        {['功能', '版面', '公式', '选项', '帮助'].map((t) => <span key={t}>{t}</span>)}
      </div>
      <div className="ml-[20px] h-full flex items-center gap-[8px] border-x-2 border-[#c8c8c8] px-[2px] text-[#333]">
        <span className="tracking-[0.4px] text-[17px]">08:33:39</span>
        <span>周二</span>
      </div>
      <div className="flex items-center text-[#333]">
        <ChevronLeft size={24} strokeWidth={3} className="ml-[18px]" />
        <Minus size={18} strokeWidth={3} className="ml-[14px]" />
        <Copy size={18} strokeWidth={2.6} className="ml-[20px] -scale-x-100" />
        <X size={22} strokeWidth={3} className="ml-[17px]" />
      </div>
    </div>
  )
}

function StatusBar() {
  const g = 'text-[#0f8a0f] text-[20px]'
  const cjk = 'text-[24px] text-[#222]'
  const total = 'text-[19px] font-bold text-[#111]'
  return (
    <div className="h-[35px] shrink-0 flex items-center pt-[1px] bg-[#f0f0f0] leading-none whitespace-nowrap">
      <span className="ml-[1px] w-[21px] h-[24px] flex items-center justify-center rounded-[2px] bg-[#f0b030] border border-[#c08020]">
        <span className="w-[13px] h-[13px] bg-[#fbe6a0] border border-[#c08020]" />
      </span>
      <span className={`${cjk} ml-[3px] w-[56px]`}>上证</span>
      <span className={`${g} w-[92px]`}>3275.41</span>
      <span className={`${g} w-[81px]`}>-25.85</span>
      <span className={`${g} w-[88px]`}>-0.78%</span>
      <span className={`${total} w-[42px]`}>4733</span>
      <span className={`${cjk} w-[52px]`}>亿</span>
      <span className={`${cjk} w-[54px]`}>深证</span>
      <span className={`${g} w-[89px]`}>11317.0</span>
      <span className={`${g} w-[86px]`}>-133.43</span>
      <span className={`${g} w-[87px]`}>-1.17%</span>
      <span className={`${total} w-[43px]`}>6101</span>
      <span className={`${cjk} w-[55px]`}>亿</span>
      <span className={`${cjk} w-[53px]`}>中小</span>
      <span className={`${g} w-[93px]`}>7423.03</span>
      <span className={g}>-72.98</span>
    </div>
  )
}

function Watermark() {
  return (
    <div className="absolute left-[1080px] top-[1286px] w-[1080px] h-[109px] bg-[#80acdb] flex items-center whitespace-nowrap border-b border-[#6a8fb8]">
      <span className="ml-[22px] w-[380px] text-[75px] font-black leading-none text-[#1a0a8c]">公式指标网</span>
      <svg viewBox="0 0 110 110" className="w-[106px] h-[106px] ml-[32px] shrink-0">
        <path id="wm-arc" d="M5 60A50 50 0 0 0 48 105" fill="none" />
        <path d="M7 52A48 48 0 0 1 48 5M62 5A48 48 0 0 1 103 52" fill="none" stroke="#d9654f" strokeWidth="11" />
        <path d="M58 103A48 48 0 0 0 103 58" fill="none" stroke="#e9cd48" strokeWidth="11" />
        <text fontSize="8" fill="#fff">
          <textPath href="#wm-arc">www.9m8.cn</textPath>
        </text>
        <path d="M49 3H61V16L66 24V48H77V60H66V66H77V80H64L63 104H47L46 80H33V66H44V60H33V48H44V24L49 16Z" fill="#e9cd48" />
        <path d="M44 36H66M44 56H66M44 72H66" stroke="#b06030" strokeWidth="2.5" />
        <circle cx="55" cy="10" r="3" fill="#80acdb" />
      </svg>
      <span className="ml-[36px] text-[72px] font-bold leading-none text-white font-['DejaVu_Serif',serif] tracking-[-1.5px] [-webkit-text-stroke:1.5px_white]">www.9m8.cn</span>
    </div>
  )
}

export default function App() {
  return (
    <div className="relative w-[2160px] h-[1395px] overflow-hidden flex flex-col bg-black font-['Liberation_Sans','Noto_Sans_CJK_SC',sans-serif]">
      <TitleBar />
      <div className="flex-1 min-h-0 flex">
        <LeftColumn />
        <QuotePanel />
        <Sidebar />
      </div>
      <StatusBar />
      <Watermark />
    </div>
  )
}
